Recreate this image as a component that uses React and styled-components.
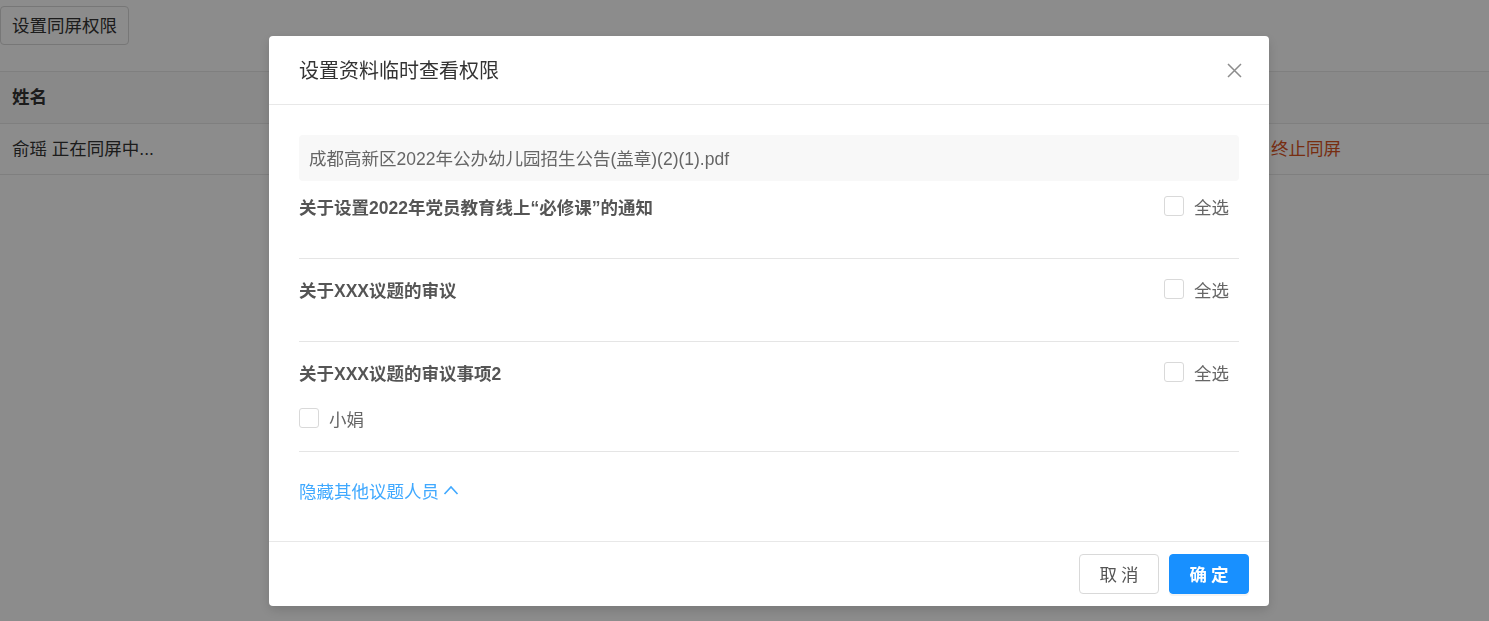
import React from "react";
import styled, { createGlobalStyle } from "styled-components";

const GlobalStyle = createGlobalStyle`
  html, body {
    margin: 0;
    padding: 0;
    background: #ffffff;
    font-family: "Liberation Sans", "Noto Sans CJK SC", sans-serif;
    color: #333333;
  }
  * { box-sizing: border-box; }
`;

const Page = styled.div`
  padding-top: 6px;
  min-height: 621px;
`;

const GhostButton = styled.button`
  height: 39px;
  padding: 0 11px 2px;
  border: 1px solid #d9d9d9;
  border-radius: 4px;
  background: #ffffff;
  font: inherit;
  font-size: 17.5px;
  color: #333333;
  cursor: pointer;
`;

const Table = styled.div`
  margin-top: 26px;
  border-top: 1px solid #e8e8e8;
`;

const TableRow = styled.div`
  display: grid;
  grid-template-columns: 1fr 230px;
  height: ${(p) => (p.$head ? 52 : 51)}px;
  align-items: center;
  border-bottom: 1px solid #e8e8e8;
  background: ${(p) => (p.$head ? "#fafafa" : "#ffffff")};
  font-size: 17.5px;
  font-weight: ${(p) => (p.$head ? 700 : 400)};
`;

const Cell = styled.div`
  padding: 0 12px 4px;
  color: ${(p) => p.$color || "#333333"};
`;

const Mask = styled.div`
  position: fixed;
  inset: 0;
  background: rgba(0, 0, 0, 0.45);
  display: flex;
  align-items: flex-start;
  padding: 36px 0 0 269px;
`;

const Dialog = styled.div`
  width: 1000px;
  background: #ffffff;
  border-radius: 4px;
  box-shadow: 0 4px 12px rgba(0, 0, 0, 0.15);
  overflow: hidden;
`;

const Header = styled.div`
  height: 69px;
  padding: 0 25px 0 30px;
  display: flex;
  align-items: center;
  justify-content: space-between;
  border-bottom: 1px solid #e8e8e8;
`;

const Title = styled.div`
  font-size: 20px;
  color: #333333;
  padding-bottom: 2px;
`;

const CloseButton = styled.button`
  width: 20px;
  height: 20px;
  padding: 0;
  border: 0;
  background: transparent;
  display: flex;
  align-items: center;
  justify-content: center;
  cursor: pointer;
`;

const Body = styled.div`
  padding: 30px 30px 39px;
`;

const FileBox = styled.div`
  height: 46px;
  padding: 0 10px 2px;
  display: flex;
  align-items: center;
  background: #f8f8f8;
  border-radius: 4px;
  font-size: 17.5px;
  color: #666666;
`;

const SectionList = styled.div`
  display: flex;
  flex-direction: column;
`;

const Section = styled.div`
  padding: 18px 0 21px;
  border-bottom: 1px solid #e5e5e5;
  &:first-child {
    padding-top: 13px;
  }
`;

const SectionHead = styled.div`
  height: 24px;
  display: flex;
  align-items: center;
  justify-content: space-between;
  padding-right: 10px;
`;

const SectionTitle = styled.div`
  font-size: 17.5px;
  font-weight: 700;
  color: #555555;
`;

const Members = styled.div`
  padding-top: 19px;
`;

const CheckLabel = styled.label`
  display: flex;
  align-items: center;
  height: 24px;
  margin-top: ${(p) => (p.$member ? 3 : 0)}px;
  font-size: 17.5px;
  color: #666666;
  cursor: pointer;
`;

const Box = styled.span`
  width: 20px;
  height: 20px;
  margin-right: 10px;
  border: 1px solid #d9d9d9;
  border-radius: 3px;
  background: #ffffff;
`;

const ToggleLink = styled.a`
  display: inline-flex;
  align-items: center;
  gap: 4px;
  margin-top: 26px;
  height: 24px;
  font-size: 17.5px;
  color: #40a9ff;
  cursor: pointer;
`;

const Footer = styled.div`
  height: 65px;
  padding: 0 20px;
  display: flex;
  align-items: center;
  justify-content: flex-end;
  gap: 10px;
  border-top: 1px solid #e8e8e8;
`;

const FooterButton = styled.button`
  width: 80px;
  height: 40px;
  border-radius: 4px;
  font: inherit;
  font-size: 17.5px;
  letter-spacing: 4px;
  padding: 0 0 2px 4px;
  cursor: pointer;
  border: 1px solid ${(p) => (p.$primary ? "#1890ff" : "#d9d9d9")};
  background: ${(p) => (p.$primary ? "#1890ff" : "#ffffff")};
  color: ${(p) => (p.$primary ? "#ffffff" : "#555555")};
  font-weight: ${(p) => (p.$primary ? 700 : 400)};
  box-shadow: ${(p) => (p.$primary ? "0 2px 0 rgba(0,0,0,0.045)" : "none")};
`;

const Check = ({ children, member }) => (
  <CheckLabel $member={member}>
    <Box />
    {children}
  </CheckLabel>
);

const topics = [
  { title: "关于设置2022年党员教育线上“必修课”的通知", members: [] },
  { title: "关于XXX议题的审议", members: [] },
  { title: "关于XXX议题的审议事项2", members: ["小娟"] },
];

export default function App() {
  return (
    <>
      <GlobalStyle />
      <Page>
        <GhostButton>设置同屏权限</GhostButton>
        <Table>
          <TableRow $head>
            <Cell>姓名</Cell>
            <Cell />
          </TableRow>
          <TableRow>
            <Cell>俞瑶 正在同屏中...</Cell>
            <Cell $color="#d9531e">终止同屏</Cell>
          </TableRow>
        </Table>
      </Page>

      <Mask>
        <Dialog>
          <Header>
            <Title>设置资料临时查看权限</Title>
            <CloseButton aria-label="close">
              <svg width="15" height="15" viewBox="0 0 15 15">
                <path d="M1 1 L14 14 M14 1 L1 14" stroke="#8c8c8c" strokeWidth="1.5" fill="none" />
              </svg>
            </CloseButton>
          </Header>
          <Body>
            <FileBox>成都高新区2022年公办幼儿园招生公告(盖章)(2)(1).pdf</FileBox>
            <SectionList>
              {topics.map((t) => (
                <Section key={t.title}>
                  <SectionHead>
                    <SectionTitle>{t.title}</SectionTitle>
                    <Check>全选</Check>
                  </SectionHead>
                  <Members>
                    {t.members.map((m) => (
                      <Check key={m} member>
                        {m}
                      </Check>
                    ))}
                  </Members>
                </Section>
              ))}
            </SectionList>
            <ToggleLink>
              隐藏其他议题人员
              <svg width="16" height="10" viewBox="0 0 16 10">
                <path d="M1.5 9 L8 2 L14.5 9" stroke="#40a9ff" strokeWidth="1.6" fill="none" />
              </svg>
            </ToggleLink>
          </Body>
          <Footer>
            <FooterButton>取消</FooterButton>
            <FooterButton $primary>确定</FooterButton>
          </Footer>
        </Dialog>
      </Mask>
    </>
  );
}
